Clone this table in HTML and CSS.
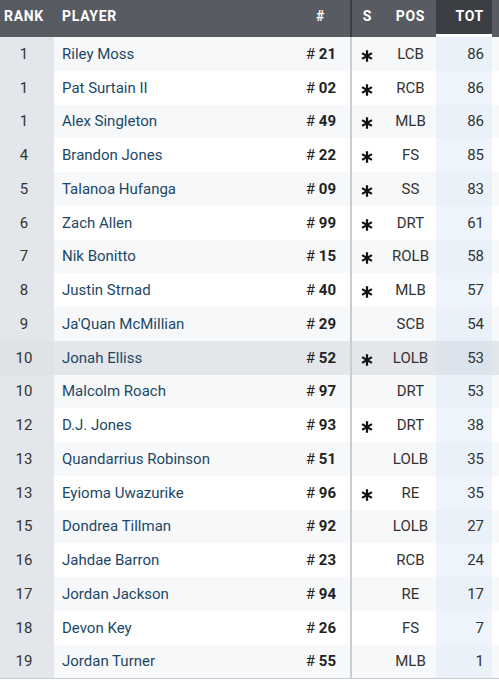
FILE: index.html
```html
<!DOCTYPE html>
<html>
<head>
<meta charset="utf-8">
<link rel="stylesheet" href="styles.css">
</head>
<body>
<table class="roster">
  <colgroup>
    <col class="c-rank"><col class="c-player"><col class="c-num"><col class="c-s"><col class="c-pos"><col class="c-tot"><col class="c-fill">
  </colgroup>
  <thead>
    <tr>
      <th class="rank">RANK</th>
      <th class="player">PLAYER</th>
      <th class="num">#</th>
      <th class="s">S</th>
      <th class="pos">POS</th>
      <th class="tot">TOT</th>
      <th class="fill"></th>
    </tr>
  </thead>
  <tbody id="rows">
    <tr><td class="rank">1</td><td class="player">Riley Moss</td><td class="num"># <b>21</b></td><td class="s"><svg class="star" viewBox="0 0 10 10"><path d="M5 0.3V9.7M0.9 2.6L9.1 7.4M0.9 7.4L9.1 2.6"/></svg></td><td class="pos">LCB</td><td class="tot">86</td><td class="fill"></td></tr>
    <tr><td class="rank">1</td><td class="player">Pat Surtain II</td><td class="num"># <b>02</b></td><td class="s"><svg class="star" viewBox="0 0 10 10"><path d="M5 0.3V9.7M0.9 2.6L9.1 7.4M0.9 7.4L9.1 2.6"/></svg></td><td class="pos">RCB</td><td class="tot">86</td><td class="fill"></td></tr>
    <tr><td class="rank">1</td><td class="player">Alex Singleton</td><td class="num"># <b>49</b></td><td class="s"><svg class="star" viewBox="0 0 10 10"><path d="M5 0.3V9.7M0.9 2.6L9.1 7.4M0.9 7.4L9.1 2.6"/></svg></td><td class="pos">MLB</td><td class="tot">86</td><td class="fill"></td></tr>
    <tr><td class="rank">4</td><td class="player">Brandon Jones</td><td class="num"># <b>22</b></td><td class="s"><svg class="star" viewBox="0 0 10 10"><path d="M5 0.3V9.7M0.9 2.6L9.1 7.4M0.9 7.4L9.1 2.6"/></svg></td><td class="pos">FS</td><td class="tot">85</td><td class="fill"></td></tr>
    <tr><td class="rank">5</td><td class="player">Talanoa Hufanga</td><td class="num"># <b>09</b></td><td class="s"><svg class="star" viewBox="0 0 10 10"><path d="M5 0.3V9.7M0.9 2.6L9.1 7.4M0.9 7.4L9.1 2.6"/></svg></td><td class="pos">SS</td><td class="tot">83</td><td class="fill"></td></tr>
    <tr><td class="rank">6</td><td class="player">Zach Allen</td><td class="num"># <b>99</b></td><td class="s"><svg class="star" viewBox="0 0 10 10"><path d="M5 0.3V9.7M0.9 2.6L9.1 7.4M0.9 7.4L9.1 2.6"/></svg></td><td class="pos">DRT</td><td class="tot">61</td><td class="fill"></td></tr>
    <tr><td class="rank">7</td><td class="player">Nik Bonitto</td><td class="num"># <b>15</b></td><td class="s"><svg class="star" viewBox="0 0 10 10"><path d="M5 0.3V9.7M0.9 2.6L9.1 7.4M0.9 7.4L9.1 2.6"/></svg></td><td class="pos">ROLB</td><td class="tot">58</td><td class="fill"></td></tr>
    <tr><td class="rank">8</td><td class="player">Justin Strnad</td><td class="num"># <b>40</b></td><td class="s"><svg class="star" viewBox="0 0 10 10"><path d="M5 0.3V9.7M0.9 2.6L9.1 7.4M0.9 7.4L9.1 2.6"/></svg></td><td class="pos">MLB</td><td class="tot">57</td><td class="fill"></td></tr>
    <tr><td class="rank">9</td><td class="player">Ja'Quan McMillian</td><td class="num"># <b>29</b></td><td class="s"></td><td class="pos">SCB</td><td class="tot">54</td><td class="fill"></td></tr>
    <tr class="hl"><td class="rank">10</td><td class="player">Jonah Elliss</td><td class="num"># <b>52</b></td><td class="s"><svg class="star" viewBox="0 0 10 10"><path d="M5 0.3V9.7M0.9 2.6L9.1 7.4M0.9 7.4L9.1 2.6"/></svg></td><td class="pos">LOLB</td><td class="tot">53</td><td class="fill"></td></tr>
    <tr><td class="rank">10</td><td class="player">Malcolm Roach</td><td class="num"># <b>97</b></td><td class="s"></td><td class="pos">DRT</td><td class="tot">53</td><td class="fill"></td></tr>
    <tr><td class="rank">12</td><td class="player">D.J. Jones</td><td class="num"># <b>93</b></td><td class="s"><svg class="star" viewBox="0 0 10 10"><path d="M5 0.3V9.7M0.9 2.6L9.1 7.4M0.9 7.4L9.1 2.6"/></svg></td><td class="pos">DRT</td><td class="tot">38</td><td class="fill"></td></tr>
    <tr><td class="rank">13</td><td class="player">Quandarrius Robinson</td><td class="num"># <b>51</b></td><td class="s"></td><td class="pos">LOLB</td><td class="tot">35</td><td class="fill"></td></tr>
    <tr><td class="rank">13</td><td class="player">Eyioma Uwazurike</td><td class="num"># <b>96</b></td><td class="s"><svg class="star" viewBox="0 0 10 10"><path d="M5 0.3V9.7M0.9 2.6L9.1 7.4M0.9 7.4L9.1 2.6"/></svg></td><td class="pos">RE</td><td class="tot">35</td><td class="fill"></td></tr>
    <tr><td class="rank">15</td><td class="player">Dondrea Tillman</td><td class="num"># <b>92</b></td><td class="s"></td><td class="pos">LOLB</td><td class="tot">27</td><td class="fill"></td></tr>
    <tr><td class="rank">16</td><td class="player">Jahdae Barron</td><td class="num"># <b>23</b></td><td class="s"></td><td class="pos">RCB</td><td class="tot">24</td><td class="fill"></td></tr>
    <tr><td class="rank">17</td><td class="player">Jordan Jackson</td><td class="num"># <b>94</b></td><td class="s"></td><td class="pos">RE</td><td class="tot">17</td><td class="fill"></td></tr>
    <tr><td class="rank">18</td><td class="player">Devon Key</td><td class="num"># <b>26</b></td><td class="s"></td><td class="pos">FS</td><td class="tot">7</td><td class="fill"></td></tr>
    <tr><td class="rank">19</td><td class="player">Jordan Turner</td><td class="num"># <b>55</b></td><td class="s"></td><td class="pos">MLB</td><td class="tot">1</td><td class="fill"></td></tr>
  </tbody>
</table>
</body>
</html>
```

FILE: styles.css
```css
html, body {
  margin: 0;
  padding: 0;
  background: #ffffff;
}

body {
  font-family: Roboto, "Liberation Sans", sans-serif;
  font-size: 15px;
  color: #333;
}

.roster {
  width: 499px;
  border-collapse: collapse;
  table-layout: fixed;
  border-bottom: 1px solid #c9cdd2;
}

.c-rank { width: 54px; }
.c-player { width: 236px; }
.c-num { width: 61px; }
.c-s { width: 34px; }
.c-pos { width: 51px; }
.c-tot { width: 56px; }
.c-fill { width: 7px; }

th, td {
  padding: 0;
  white-space: nowrap;
  overflow: hidden;
}

thead tr {
  height: 37px;
  background: #585c62;
}

th {
  color: #ffffff;
  font-size: 14px;
  font-weight: 700;
  letter-spacing: 0.7px;
  text-align: left;
  vertical-align: middle;
  padding-bottom: 6px;
}

th.rank { text-align: left; padding-left: 4px; }
th.player { padding-left: 8px; }
th.num { text-align: right; padding-right: 25px; border-right: 2px solid #3b3e43; }
th.s { text-align: center; padding-right: 2px; }
th.pos { text-align: center; }
th.tot {
  text-align: right;
  padding-right: 8px;
  background: #3b3e43;
  box-shadow: inset 0 -3px 0 #ffffff;
}

tbody tr {
  height: 33.75px;
  background: #ffffff;
}

tbody tr:nth-child(odd) {
  background: #f7f8fa;
}

tbody tr.hl {
  background: #e3e6ea;
}

td {
  vertical-align: middle;
}

td.rank {
  background: #e3e6ea;
  text-align: center;
  padding-right: 6px;
  color: #333;
}

tr.hl td.rank { background: #dfe2e6; }

td.player {
  padding-left: 8px;
  color: #1c4866;
}

td.num {
  text-align: right;
  padding-right: 14px;
  color: #222;
  border-right: 2px solid #c9cdd2;
}

td.num b { font-weight: 700; }

td.s { text-align: center; padding-right: 3px; }

.star {
  width: 12px;
  height: 12px;
  vertical-align: -3px;
  fill: none;
  stroke: #111;
  stroke-width: 1.9;
}

td.pos { text-align: center; color: #333; }

td.tot {
  text-align: right;
  padding-right: 8px;
  color: #333;
  background: #edf4fb;
}

tr:nth-child(odd) td.tot { background: #eaf1f8; }
tr.hl td.tot { background: #dbe4ed; }
```
